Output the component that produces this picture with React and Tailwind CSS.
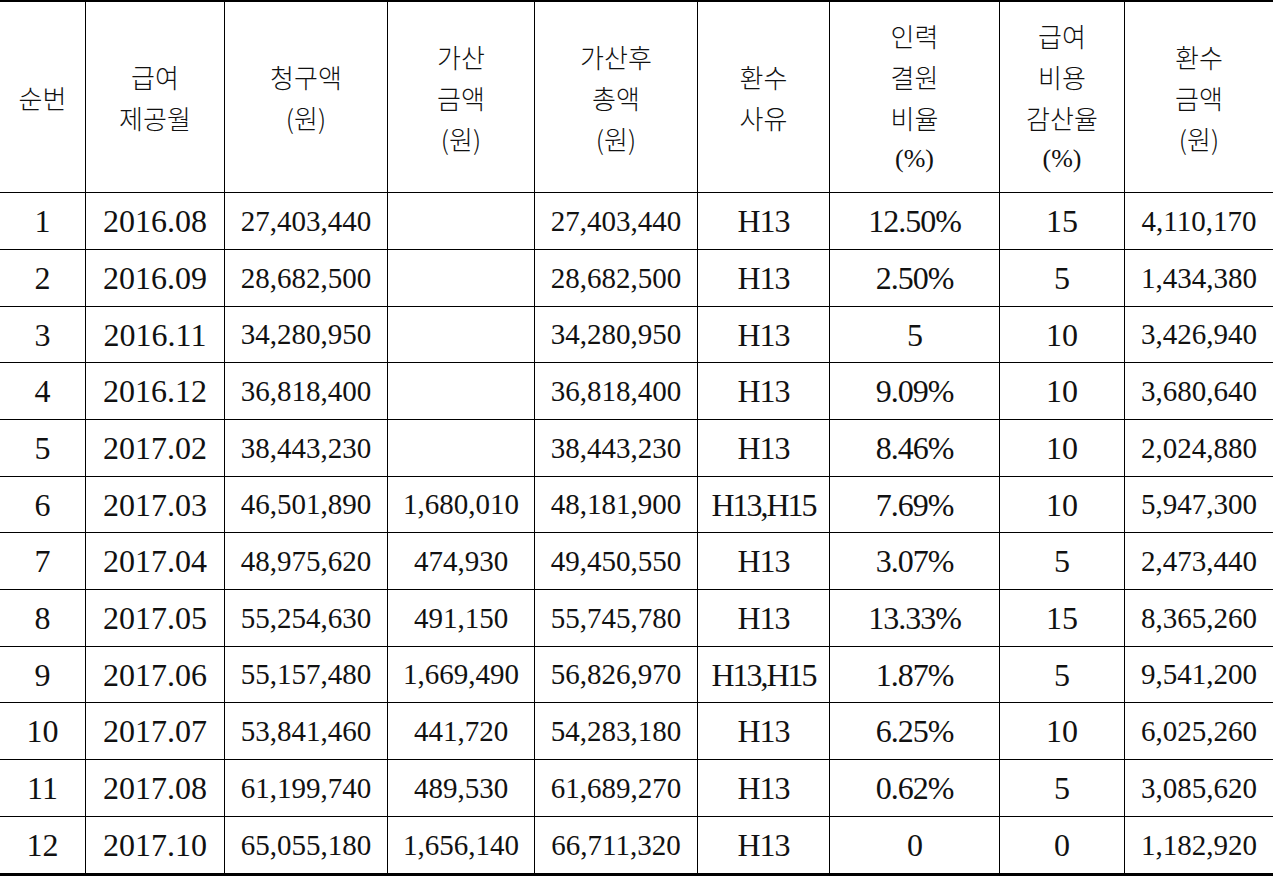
import React from "react";

const rows = [
  ["1", "2016.08", "27,403,440", "", "27,403,440", "H13", "12.50%", "15", "4,110,170"],
  ["2", "2016.09", "28,682,500", "", "28,682,500", "H13", "2.50%", "5", "1,434,380"],
  ["3", "2016.11", "34,280,950", "", "34,280,950", "H13", "5", "10", "3,426,940"],
  ["4", "2016.12", "36,818,400", "", "36,818,400", "H13", "9.09%", "10", "3,680,640"],
  ["5", "2017.02", "38,443,230", "", "38,443,230", "H13", "8.46%", "10", "2,024,880"],
  ["6", "2017.03", "46,501,890", "1,680,010", "48,181,900", "H13,H15", "7.69%", "10", "5,947,300"],
  ["7", "2017.04", "48,975,620", "474,930", "49,450,550", "H13", "3.07%", "5", "2,473,440"],
  ["8", "2017.05", "55,254,630", "491,150", "55,745,780", "H13", "13.33%", "15", "8,365,260"],
  ["9", "2017.06", "55,157,480", "1,669,490", "56,826,970", "H13,H15", "1.87%", "5", "9,541,200"],
  ["10", "2017.07", "53,841,460", "441,720", "54,283,180", "H13", "6.25%", "10", "6,025,260"],
  ["11", "2017.08", "61,199,740", "489,530", "61,689,270", "H13", "0.62%", "5", "3,085,620"],
  ["12", "2017.10", "65,055,180", "1,656,140", "66,711,320", "H13", "0", "0", "1,182,920"],
];

const headers = [
  ["순번"],
  ["급여", "제공월"],
  ["청구액", "(원)"],
  ["가산", "금액", "(원)"],
  ["가산후", "총액", "(원)"],
  ["환수", "사유"],
  ["인력", "결원", "비율", "(%)"],
  ["급여", "비용", "감산율", "(%)"],
  ["환수", "금액", "(원)"],
];

const amountCols = new Set([2, 3, 4, 8]);
const heights = ["h-[57px]", "h-[57px]", "h-[56px]"];

const serif = { fontFamily: '"Liberation Serif", "Times New Roman", serif' };
const kr = { fontFamily: '"Noto Sans CJK KR", "Noto Sans", sans-serif' };

export default function App() {
  return (
    <div className="w-[1273px] h-[876px] bg-white text-[#111] overflow-hidden">
      <div className="grid grid-cols-[86px_139px_163px_147px_163px_132px_170px_125px_148px] border-t-2 border-b-[3px] border-black">
        {headers.map((lines, i) => (
          <div
            key={"h" + i}
            className={`h-[191px] flex flex-col items-center justify-center border-b border-black ${i < 8 ? "border-r" : ""}`}
          >
            {lines.map((l, j) => (
              <div
                key={j}
                className="text-[26px] leading-[41px] font-light"
                style={l.startsWith("(") && l.includes("%") ? serif : kr}
              >
                {l}
              </div>
            ))}
          </div>
        ))}
        {rows.map((r, ri) =>
          r.map((c, ci) => {
            const isAmount = amountCols.has(ci);
            const isReason = ci === 5;
            let size = isAmount ? "text-[29px]" : "text-[32px]";
            let track = "";
            if (isReason) track = c.includes(",") ? "tracking-[-2px]" : "tracking-[-1px]";
            if (ci === 6) track = "tracking-[-1px]";
            return (
              <div
                key={ri + "-" + ci}
                className={`${heights[ri % 3]} flex items-center justify-center ${ci < 8 ? "border-r" : ""} ${ri < 11 ? "border-b" : ""} border-black ${size} ${track} leading-none whitespace-nowrap`}
                style={serif}
              >
                {c}
              </div>
            );
          })
        )}
      </div>
    </div>
  );
}
